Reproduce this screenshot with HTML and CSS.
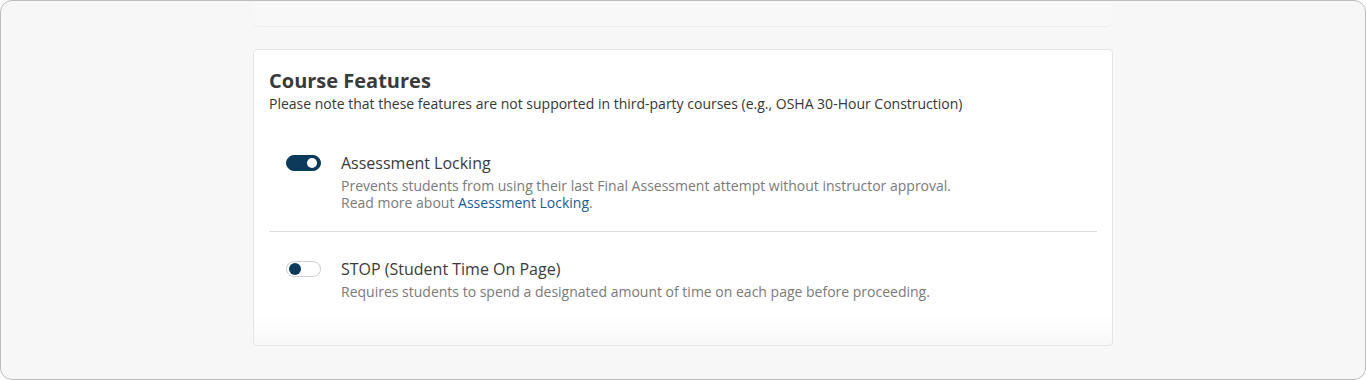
FILE: index.html
```html
<!DOCTYPE html>
<html>
<head>
    <title>Course Features</title>
    <meta charset="UTF-8">
    <link rel="stylesheet" href="styles.css">
</head>
<body>
    <div class="frame">
        <div class="column">
            <div class="prev-card"></div>
            <div class="card">
                <h2 class="card-title">Course Features</h2>
                <p class="card-note">Please note that these features are not supported in third-party courses (e.g., OSHA 30-Hour Construction)</p>
                <div class="feature-list">
                    <div class="feature">
                        <span class="toggle toggle-on"><span class="knob"></span></span>
                        <div class="feature-text">
                            <div class="feature-name">Assessment Locking</div>
                            <div class="feature-desc">
                                Prevents students from using their last Final Assessment attempt without instructor approval.<br>
                                Read more about <a href="#">Assessment Locking</a>.
                            </div>
                        </div>
                    </div>
                    <div class="feature">
                        <span class="toggle"><span class="knob"></span></span>
                        <div class="feature-text">
                            <div class="feature-name">STOP (Student Time On Page)</div>
                            <div class="feature-desc">Requires students to spend a designated amount of time on each page before proceeding.</div>
                        </div>
                    </div>
                </div>
            </div>
        </div>
    </div>
</body>
</html>
```

FILE: styles.css
```css
* {
    box-sizing: border-box;
}
body {
    margin: 0;
    font-family: "Open Sans", Arial, sans-serif;
    background: #ffffff;
}
.frame {
    height: 380px;
    border: 1px solid #bdbdbd;
    border-radius: 12px;
    background: #f7f7f7;
    overflow: hidden;
}
.column {
    width: 860px;
    margin: 0 auto;
}
.prev-card {
    height: 26px;
    background: #f8f8f8;
    border-bottom: 1px solid #ececec;
    border-radius: 0 0 6px 6px;
}
.card {
    margin-top: 22px;
    height: 297px;
    padding: 17px 15px 0;
    background: linear-gradient(to bottom, #ffffff 0, #ffffff 262px, #f8f8f8 296px);
    border: 1px solid #e4e4e4;
    border-radius: 4px;
}
.card-title {
    margin: 0;
    font-size: 20px;
    line-height: 28px;
    font-weight: 700;
    color: #3a3a3a;
}
.card-note {
    margin: 0;
    font-size: 14px;
    line-height: 18px;
    color: #363636;
}
.feature-list {
    margin-top: 13px;
}
.feature {
    display: flex;
    align-items: flex-start;
    gap: 20px;
    padding: 26px 17px 20px;
}
.feature + .feature {
    border-top: 1px solid #dcdcdc;
}
.toggle {
    position: relative;
    flex: none;
    width: 35px;
    height: 16px;
    margin-top: 3px;
    border: 1px solid #cfcfcf;
    border-radius: 8px;
    background: #ffffff;
}
.toggle .knob {
    position: absolute;
    top: 1px;
    left: 2px;
    width: 12px;
    height: 12px;
    border-radius: 50%;
    background: #0c3a5b;
}
.toggle-on {
    background: #0c3a5b;
    border-color: #0c3a5b;
}
.toggle-on .knob {
    top: 2px;
    left: auto;
    right: 3px;
    width: 10px;
    height: 10px;
    background: #ffffff;
}
.feature-name {
    font-size: 16px;
    line-height: 22px;
    color: #3a3a3a;
}
.feature-desc {
    margin-top: 3px;
    font-size: 14px;
    line-height: 17px;
    color: #7a7a7a;
}
.feature-desc a {
    color: #1b5a97;
    text-decoration: none;
}
```
